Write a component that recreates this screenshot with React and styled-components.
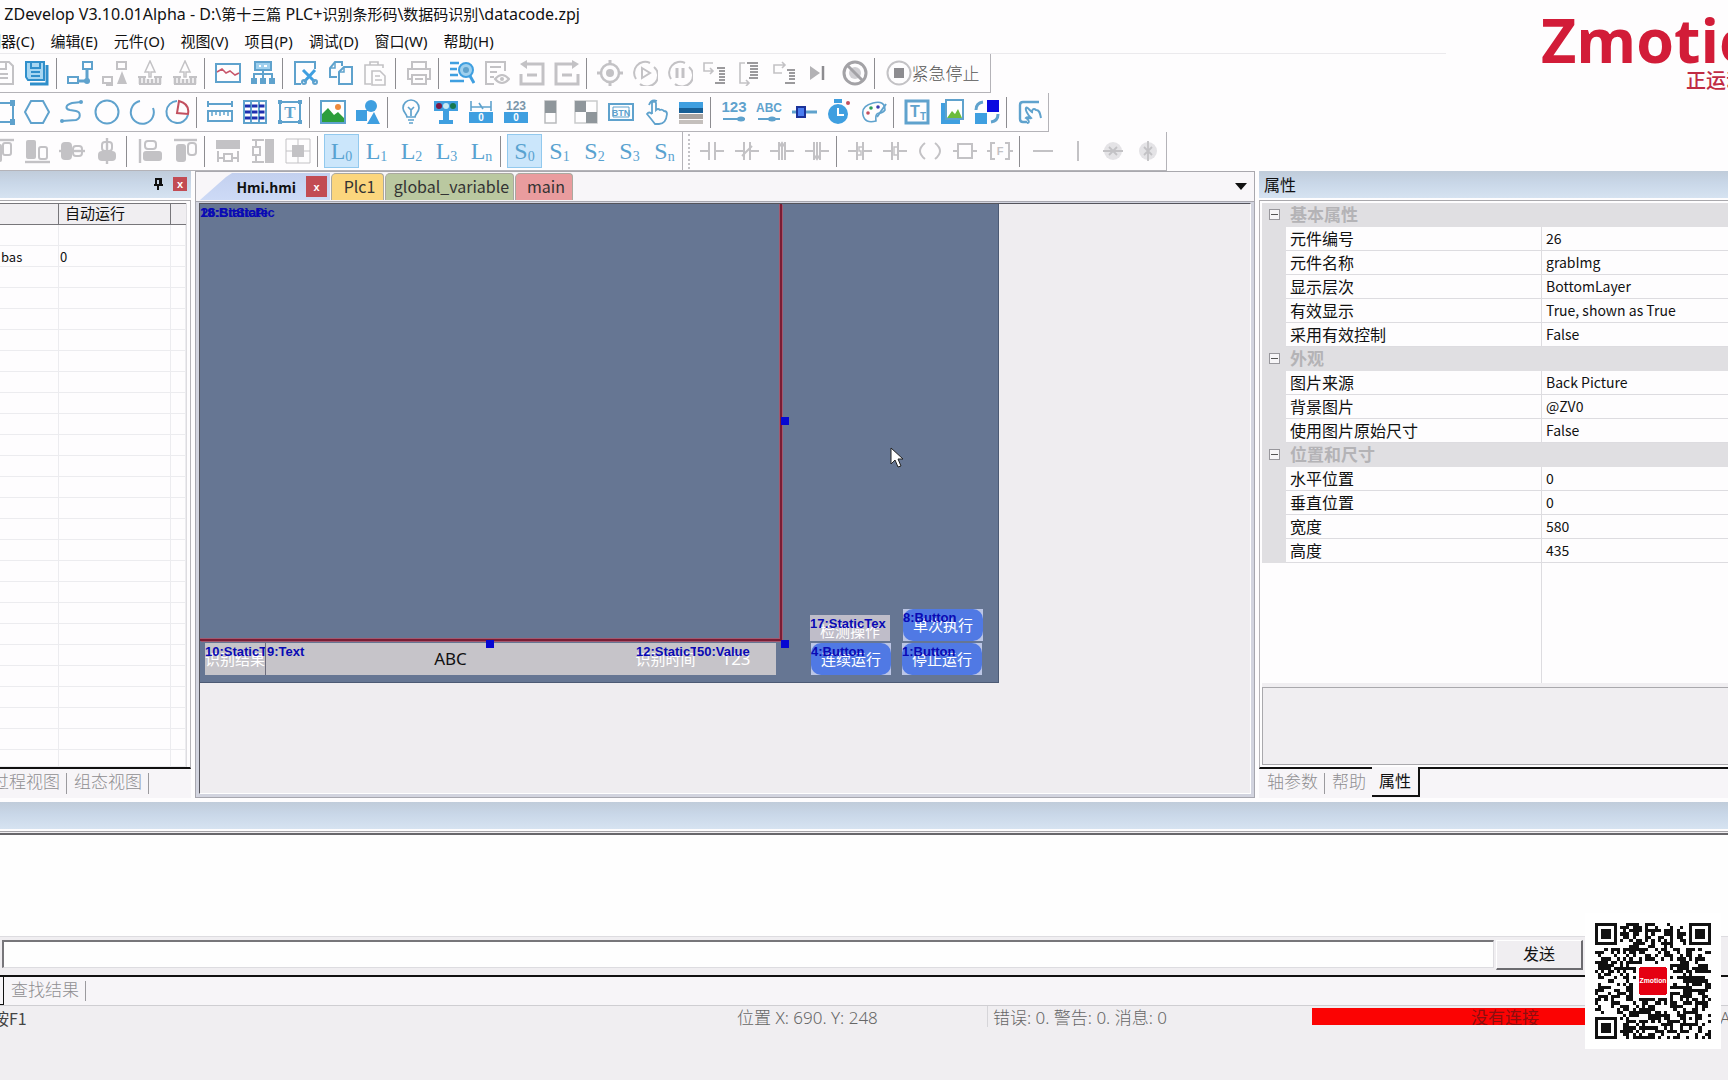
import React from "react";
import styled, { createGlobalStyle, css } from "styled-components";

const BLUE = "#3f9fe0";
const LINE = "#5fa2cd";
const GREY = "#c3c2c5";
const UI = '"Noto Sans CJK SC", "Noto Sans", sans-serif';
const UI_WIDE = '"Noto Sans", "Noto Sans CJK SC", sans-serif';

const Global = createGlobalStyle`
  *, *::before, *::after { box-sizing: border-box; }
  html, body { margin: 0; padding: 0; }
  body { font-family: ${UI}; color: #111; background: #f0eef1; overflow: hidden; }
  button, input { font-family: inherit; margin: 0; }
  button { border: 0; background: none; padding: 0; color: inherit; }
`;

const Page = styled.div`
  position: relative;
  display: flex;
  flex-direction: column;
  min-height: 100vh;
  overflow: hidden;
`;

/* ---------- window top ---------- */
const Top = styled.header`
  position: relative;
  background: #fefdfe;
`;
const TitleBar = styled.h1`
  margin: 0 0 0 -5px;
  height: 28px;
  font-family: ${UI_WIDE};
  font-size: 16px;
  font-weight: 400;
  line-height: 28px;
  white-space: nowrap;
`;
const Han = styled.span`
  font-size: 15px;
`;
const MenuBar = styled.nav`
  display: flex;
  gap: 16px;
  height: 25px;
  margin-left: -29px;
  font-family: ${UI_WIDE};
`;
const MenuItem = styled.button`
  font-size: 15px;
  line-height: 24px;
  white-space: nowrap;
`;
const MenuRule = styled.div`
  height: 1px;
  margin-right: 282px;
  background: #ebeaed;
`;
const Brand = styled.div`
  position: absolute;
  top: 0;
  left: calc(100% - 187px);
  width: 187px;
  height: 96px;
  overflow: hidden;
  white-space: nowrap;
  color: #d21c38;
`;
const BrandName = styled.div`
  height: 70px;
  font: 700 61px/80px "Open Sans", sans-serif;
`;
const BrandSub = styled.div`
  padding-left: 145px;
  font-size: 20px;
  line-height: 20px;
  font-weight: 500;
  color: #c02b44;
`;

/* ---------- toolbars ---------- */
const ToolRow = styled.div`
  display: flex;
  height: 39px;
`;
const Toolbar = styled.div`
  display: flex;
  align-items: center;
  height: 39px;
  margin-left: ${(p) => (p.$cut ? "-15px" : "0")};
  border-right: 1px solid #b4b3b8;
  border-bottom: 1px solid #b4b3b8;
`;
const ToolButton = styled.button`
  display: flex;
  align-items: center;
  justify-content: center;
  width: ${(p) => (p.$wide ? "109px" : "35px")};
  height: 34px;
  padding-right: ${(p) => (p.$wide ? "6px" : p.$level ? "0" : "2px")};
  color: ${(p) => (p.$grey ? GREY : LINE)};
  ${(p) =>
    p.$on &&
    css`
      background: #cbe6fb;
      border: 1px solid #92c9ee;
    `}
`;
const StopText = styled.span`
  font-size: 17px;
  line-height: 24px;
  font-weight: 300;
  color: #555;
  white-space: nowrap;
`;
const Separator = styled.span`
  width: 1px;
  height: 31px;
  margin: 0 6px 0 1px;
  background: #8d8c90;
`;
const Grip = styled.span`
  height: 35px;
  margin: 0 5px;
  border-left: 2px dotted #c3c2c6;
`;
const Glyph = styled.svg`
  width: 26px;
  height: 26px;
  flex: none;
  fill: none;
  stroke: currentColor;
  stroke-width: 2;
  text { stroke: none; fill: currentColor; }
`;
const Layer = styled.span`
  font: 400 24px/28px "Liberation Serif", serif;
  color: #58a2d0;
  sub { font-size: 14px; line-height: 14px; vertical-align: -2px; }
`;

/* ---------- docks ---------- */
const Workspace = styled.main`
  flex: 1;
  display: grid;
  grid-template-columns: 191px minmax(0, 1fr) 469px;
  gap: 4px;
  padding-bottom: 4px;
  background: #fefdfe;
`;
const Dock = styled.section`
  display: flex;
  flex-direction: column;
  min-width: 0;
  overflow: hidden;
`;
const DockHeader = styled.header`
  display: flex;
  align-items: center;
  gap: 8px;
  height: 27px;
  flex: none;
  padding: 0 4px 2px 5px;
  background: linear-gradient(#c0ccda, #c9d7e8 45%, #d6e3f1);
`;
const DockTitle = styled.h2`
  margin: 0;
  font-size: 16px;
  line-height: 24px;
  font-weight: 400;
`;
const Spacer = styled.span`
  flex: 1;
`;
const PinButton = styled.button`
  display: flex;
  width: 14px;
  height: 14px;
`;
const CloseButton = styled.button`
  width: ${(p) => (p.$size)}px;
  height: ${(p) => (p.$size)}px;
  flex: none;
  background: #c24b53;
  color: #fff;
  font: 700 11px/12px "Liberation Sans", sans-serif;
`;
const DockBody = styled.div`
  flex: 1;
  display: flex;
  flex-direction: column;
  margin-top: 2px;
  border-top: 1px solid #a9a8ac;
  border-bottom: 2px solid #111;
  background: #fefdfe;
  ${(p) =>
    p.$side === "left"
      ? css`
          border-right: 1px solid #b5b4b8;
          padding: 2px 3px 0 0;
        `
      : css`
          border-left: 1px solid #b5b4b8;
          padding: 2px 0 2px 2px;
        `}
`;
const TabStrip = styled.div`
  display: flex;
  height: 29px;
  flex: none;
  padding-left: 1px;
  background: #f7f5f8;
  margin-left: ${(p) => (p.$cut ? "-16px" : "0")};
`;
const DockTab = styled.button`
  position: relative;
  padding: 0 7px 5px;
  font-size: ${(p) => (p.$on ? 16 : 17)}px;
  line-height: 24px;
  color: ${(p) => (p.$on ? "#111" : "#8f8e91")};
  font-weight: ${(p) => (p.$on ? 400 : 300)};
  white-space: nowrap;
  ${(p) =>
    p.$on &&
    css`
      margin-top: -2px;
      margin-left: -1px;
      margin-bottom: 1px;
      background: #f7f5f8;
      border-right: 2px solid #111;
      border-bottom: 2px solid #111;
      padding-bottom: 2px;
    `}
  ${(p) =>
    p.$rule &&
    css`
      &::after {
        content: "";
        position: absolute;
        right: 0;
        top: 4px;
        bottom: 4px;
        border-right: 1px solid #9b9a9e;
      }
    `}
`;

/* ---------- left table ---------- */
const FileTable = styled.table`
  width: 100%;
  table-layout: fixed;
  border-collapse: separate;
  border-spacing: 0;
  line-height: 18px;
  border-right: 1px solid #dddce0;
  flex: 1;
  th {
    height: 22px;
    padding: 0 6px 2px;
    text-align: left;
    font-size: 15px;
    font-weight: 400;
    background: #f0eef1;
    border: solid #77767a;
    border-width: 1px 1px 1px 0;
  }
  th:last-child { border-right: 0; }
  td {
    height: 21px;
    padding: 2px 1px 0;
    border-right: 1px solid #ececef;
    border-bottom: 1px solid #ececef;
    font-size: 13px;
  }
  tr:last-child td { height: auto; }
`;

/* ---------- editor ---------- */
const EditorTabs = styled.div`
  display: flex;
  align-items: flex-end;
  height: 30px;
  flex: none;
  padding: 0 3px 1px 4px;
  background: #f8f6f9;
  border: solid #a9a8ae;
  border-width: 1px 1px 0 1px;
`;
const FileTab = styled.button`
  width: ${(p) => p.$w}px;
  height: 27px;
  margin-left: 1px;
  padding: 0 0 3px 4px;
  font-size: 16px;
  line-height: 24px;
  color: #333;
  white-space: nowrap;
  border: 1px solid #aaa9a0;
  border-bottom: 0;
  border-radius: 5px 4px 0 0;
  background: ${(p) => p.$bg};
`;
const ActiveTab = styled.div`
  display: flex;
  align-items: center;
  justify-content: flex-end;
  gap: 10px;
  width: 130px;
  height: 27px;
  padding-right: 3px;
  background: linear-gradient(#c3d0ef, #cddaf6);
  clip-path: polygon(0 100%, 26px 4px, 32px 0, 100% 0, 100% 100%);
`;
const ActiveTabLabel = styled.button`
  font-size: 14px;
  font-weight: 700;
  line-height: 26px;
`;
const TabListButton = styled.button`
  align-self: center;
  width: 20px;
  height: 14px;
  display: flex;
  justify-content: center;
  align-items: center;
`;
const EditorFrame = styled.div`
  flex: 1;
  display: flex;
  padding: 1px 3px 3px;
  background: #d2d4df;
  border: 1px solid #a7a7af;
`;
const EditorView = styled.div`
  flex: 1;
  overflow: hidden;
  background: #efedf0;
  border: 1px solid #54545c;
  border-right-color: #fff;
  border-bottom-color: #fff;
`;
const Stage = styled.div`
  position: relative;
  width: 799px;
  height: 479px;
  background: #667693;
  border: solid #4c5a74;
  border-width: 0 1px 1px 0;
  overflow: hidden;
`;
const Selected = styled.div`
  position: absolute;
  inset: 0 auto auto 0;
  width: 582px;
  height: 437px;
  border: solid #7a1c34;
  border-width: 0 2px 2px 0;
  box-shadow: 1px 1px 0 #a25a70, inset -1px -1px 0 #a25a70;
`;
const Handle = styled.i`
  position: absolute;
  left: ${(p) => p.$x}px;
  top: ${(p) => p.$y}px;
  width: 8px;
  height: 8px;
  margin: -4px;
  background: #0707d2;
`;
const Item = styled.div`
  position: absolute;
  left: ${(p) => p.$x}px;
  top: ${(p) => p.$y}px;
  width: ${(p) => p.$w}px;
  height: ${(p) => p.$h || 32}px;
  overflow: hidden;
  background: ${(p) => p.$bg || "#c6c4c9"};
  border-right: ${(p) => (p.$edge ? "1px solid #6d6d7c" : "0")};
  color: ${(p) => (p.$dark ? "#111" : "#fff")};
  font-size: 15px;
  line-height: 32px;
  text-align: center;
  white-space: nowrap;
`;
const Value = styled(Item)`
  font-family: ${UI_WIDE};
  font-size: 17px;
`;
const ItemTag = styled.span`
  position: absolute;
  left: ${(p) => (p.$in ? 1 : 0)}px;
  top: 1px;
  font: 700 13px/16px "Liberation Sans", sans-serif;
  color: #0a0ab4;
  white-space: nowrap;
`;
const HmiButton = styled.button`
  width: 100%;
  height: 100%;
  display: block;
  background: #5079e4;
  border-radius: 10px;
  color: #fff;
  font-size: 15px;
  line-height: 32px;
`;
const Pointer = styled.svg`
  position: absolute;
  left: 690px;
  top: 243px;
  width: 13px;
  height: 21px;
`;

/* ---------- property grid ---------- */
const PropTable = styled.table`
  width: 100%;
  flex: none;
  table-layout: fixed;
  border-collapse: separate;
  border-spacing: 0;
  font-size: 16px;
  line-height: 20px;
  th, td { height: 24px; padding: 0 4px 2px; text-align: left; white-space: nowrap; font-weight: 400; }
`;
const Gutter = styled.td`
  background: #e0dfe2;
`;
const Category = styled.th`
  && { font-size: 17px; font-weight: 700; }
  color: #b4b3b6;
  background: #e0dfe2;
`;
const PropName = styled.th`
  border-bottom: 1px solid #dddce0;
`;
const PropValue = styled.td`
  border-bottom: 1px solid #dddce0;
  border-left: 1px solid #dddce0;
  font-size: 14px;
`;
const Fold = styled.button`
  display: block;
  width: 11px;
  height: 11px;
  margin-left: 3px;
  border: 1px solid #98979c;
  background: linear-gradient(#555, #555) center / 7px 1px no-repeat #f7f6f8;
`;
const PropRest = styled.div`
  flex: 1;
  display: grid;
  grid-template-columns: 279px 1fr;
  i:last-child { border-left: 1px solid #dddce0; }
`;
const PropHelp = styled.div`
  height: 82px;
  flex: none;
  border-top: 4px solid #f0eef1;
  background: #f0eef1;
  box-shadow: inset 1px 1px 0 #a9a8ac, inset 0 -1px 0 #a9a8ac;
`;

/* ---------- output dock ---------- */
const Output = styled.section`
  background: #f0eef1;
`;
const OutputRim = styled.div`
  height: 6px;
  border-top: 2px solid #fefdfe;
  border-bottom: 2px solid #68676b;
  box-shadow: inset 0 1px 0 #a5a4a8;
`;
const OutputLog = styled.div`
  height: 102px;
  background: #fefefe;
  border-bottom: 1px solid #dddce0;
`;
const CommandRow = styled.form`
  display: flex;
  gap: 2px;
  height: 40px;
  padding: 3px 145px 7px 2px;
  border-bottom: 2px solid #111;
`;
const CommandInput = styled.input`
  flex: 1;
  min-width: 0;
  height: 28px;
  border: 1px solid #dddce0;
  border-top: 2px solid #77767a;
  border-left: 2px solid #77767a;
  border-radius: 0;
  background: #fefefe;
  font-size: 15px;
`;
const SendButton = styled.button`
  width: 87px;
  height: 30px;
  padding-bottom: 3px;
  font-size: 16px;
  line-height: 24px;
  background: #f0eef1;
  border: 1px solid #fff;
  border-right: 2px solid #6c6b70;
  border-bottom: 2px solid #6c6b70;
`;
const OutputTabs = styled(TabStrip)`
  padding-left: 0;
  border-bottom: 1px solid #cfced2;
`;
const OpenTabEdge = styled.span`
  width: 4px;
  border: solid #111;
  border-width: 0 1px 1px 0;
`;

/* ---------- status bar ---------- */
const StatusBar = styled.footer`
  display: flex;
  height: 74px;
  padding-bottom: 53px;
  font-family: ${UI_WIDE};
  font-size: 17px;
  font-weight: 300;
  line-height: 24px;
  color: #666;
  white-space: nowrap;
`;
const StatusHint = styled.span`
  flex: 1;
  margin-left: -7px;
  font-family: ${UI};
  font-size: 16px;
  font-weight: 400;
  color: #444;
`;
const StatusCell = styled.span`
  width: ${(p) => p.$w}px;
  padding-left: ${(p) => (p.$rule ? 5 : 0)}px;
  border-left: ${(p) => (p.$rule ? "1px solid #d6d5d9" : "0")};
`;
const Link = styled.span`
  width: 386px;
  height: 17px;
  margin: 2px 22px 0 5px;
  overflow: hidden;
  background: #fb0303;
  color: #8a0f10;
  font-size: 17px;
  line-height: 20px;
  font-weight: 400;
  text-align: center;
`;
const Clip = styled.span`
  width: 8px;
  overflow: hidden;
`;
const QrCard = styled.div`
  position: absolute;
  right: 7px;
  bottom: 31px;
  width: 136px;
  height: 136px;
  padding: 10px;
  background: #fff;
  svg { display: block; width: 116px; height: 116px; }
`;

/* ---------- icons ---------- */
const f = { fill: "currentColor", stroke: "none" };
const T = ({ x = 13, y, s, c, serif, children }) => (
  <text x={x} y={y} fontSize={s} textAnchor="middle" fontWeight="700" style={c ? { fill: c } : undefined}
    fontFamily={serif ? "Liberation Serif, serif" : "Liberation Sans, sans-serif"}>{children}</text>
);
const contact = <path d="M1 13h9M16 13h9M10 4v18M16 4v18" />;
const listLines = "M15 8h8M17 11h6M17 14h6M17 17h6M17 20h6M13 23h10";

const icons = {
  save: <><path d="M3 2h17l4 4v18H3z" /><path d="M8 2v7h9V2M8 14h11M8 18h11" /></>,
  saveAll: <g stroke="#2f8fcb"><path d="M2 2h18v18H4l-2-3z" fill="#a6d6f2" /><path d="M7 2v6h9V2M7 12h9M7 16h9" /><path d="M23 5v19H6" strokeWidth="3" /></g>,
  connect: <><path d="M16 2h9v7h-9zM1 17h10v6H1z" /><path d="M20 9v12h-9" strokeWidth="3" /><circle cx="20" cy="21" r="3" {...f} /></>,
  disconnect: <><path d="M15 2h9v7h-9zM1 17h9v6H1zM4 25h7" /><path d="M20 11l5 13H15z" {...f} /></>,
  down: <><path d="M13 1l-5 11h4v5h2v-5h4z" strokeWidth="1.5" /><path d="M1 17h8M17 17h8M2 24h22" /><path d="M3 18v6M7 18v6M11 19v5M15 19v5M19 18v6M23 18v6" strokeWidth="2.6" /></>,
  scope: <><path d="M1 4h24v18H1z" /><path d="M2 12l5-3 4 4 4-2 5 4 4-2" stroke="#c8566b" strokeWidth="1.5" /></>,
  network: <><path d="M5 2h16v8H5z" fill="#9fd0ee" /><path d="M13 10v8M4 18v-4h18v4" /><path d="M1 18h6v6H1zM10 18h6v6h-6zM19 18h6v6h-6z" {...f} /><path d="M9 6h2M14 6h3" stroke="#fff" /></>,
  cut: <><path d="M22 9V2H2v22h6" /><path d="M10 10l12 12M22 10L11 22" stroke={BLUE} strokeWidth="3" /><circle cx="11" cy="22" r="2" /><circle cx="22" cy="22" r="2" /></>,
  copy: <><path d="M9 17H2V8l5-6h7v4" /><path d="M16 7h8v17H11V12z" /><path d="M7 2v6H2M16 7v5h-5" strokeWidth="1.5" /></>,
  paste: <><path d="M8 24H2V5h18v3M7 5V2h8v3" strokeWidth="1.6" /><path d="M9 11h8l5 5v9H9zM12 16h5M12 20h7" strokeWidth="1.6" /></>,
  print: <><path d="M6 8V2h14v6M6 19H2V9h22v10h-4" /><path d="M6 15h14v9H6zM9 19h8" /></>,
  find: <><path d="M1 3h9M1 9h7M1 15h8M1 21h14" stroke={BLUE} strokeWidth="2.6" /><circle cx="17" cy="10" r="7" fill="#9fd0ee" stroke={BLUE} /><circle cx="17" cy="10" r="3" {...f} /><path d="M21 16l4 7" stroke={BLUE} strokeWidth="3" /></>,
  review: <><path d="M10 24H2V2h19v9M6 7h11M6 12h7M6 17h4" /><path d="M11 19q7-8 14 0q-7 8-14 0z" /><circle cx="18" cy="19" r="2" {...f} /></>,
  undo: <><path d="M6 4h18v20H2V14M8 15h10" strokeWidth="3" /><path d="M8 0v9L1 4z" {...f} /></>,
  redo: <><path d="M20 4H2v20h22V14M8 15h10" strokeWidth="3" /><path d="M18 0v9l7-5z" {...f} /></>,
  target: <><circle cx="13" cy="13" r="9" strokeWidth="2.5" /><circle cx="13" cy="13" r="4" {...f} /><path d="M13 0v5M13 21v5M0 13h5M21 13h5" strokeWidth="3" /></>,
  play: <><path d="M4 19a11 11 0 0 1 14-16M22 7a11 11 0 0 1-14 17" /><path d="M10 8l8 5-8 5z" /></>,
  pause: <><path d="M4 19a11 11 0 0 1 14-16M22 7a11 11 0 0 1-14 17" /><path d="M10 8v10M16 8v10" strokeWidth="3" /></>,
  stepIn: <><path d="M11 3H2v8h8M8 8l3 3-3 3" strokeWidth="1.6" /><path d={listLines} stroke="#9b9a9d" strokeWidth="2.2" /></>,
  stepOver: <><path d="M8 3H3v20h8M9 20l3 3-3 3" strokeWidth="1.6" /><path d="M10 3h11M13 6h8M13 9h8M13 12h8M13 15h8M12 18h9" stroke="#9b9a9d" strokeWidth="2.2" /></>,
  stepOut: <><path d="M13 5H2v8h8M10 2l3 3-3 3" strokeWidth="1.6" /><path d="M15 10h8M17 13h6M17 16h6M17 19h6M13 23h10" stroke="#9b9a9d" strokeWidth="2.2" /></>,
  toCursor: <><path d="M3 6l10 7-10 7z" fill="#b3b2b5" stroke="none" /><path d="M16 6v14" stroke="#8d8c90" strokeWidth="2.5" /></>,
  ban: <g stroke="#a3a2a6"><circle cx="13" cy="13" r="11" strokeWidth="3" /><circle cx="13" cy="13" r="6" fill="#cfced2" stroke="none" /><path d="M5 5l16 16" strokeWidth="3" /></g>,
  stop: <><circle cx="13" cy="13" r="11.5" /><path d="M8 8h10v10H8z" fill="#8d8c90" stroke="none" /></>,

  rect: <path d="M1 4h23v19H1zM22 2h4v4h-4zM22 21h4v4h-4z" />,
  polygon: <path d="M7 2h12l6 11-6 11H7L1 13z" />,
  curve: <><path d="M22 3l-9 1C6 6 6 10 11 11l6 1c5 1 5 7 0 9l-14 1" /><circle cx="22" cy="3" r="2" {...f} /><circle cx="3" cy="22" r="2" {...f} /></>,
  circle: <circle cx="13" cy="13" r="11.5" />,
  arc: <path d="M11 2A11.5 11.5 0 1 0 24 9" />,
  pie: <><path d="M13 2a11 11 0 1 0 11 14" /><path d="M15 2l-2 12 11 1Q26 5 15 2z" stroke="#c2505f" /></>,
  ruler: <><path d="M2 5h22M1 2v6M25 2v6M1 12h24v10H1z" /><path d="M5 12v5M9 12v4M13 12v5M17 12v4M21 12v5" strokeWidth="1.5" /></>,
  table: <><path d="M2 2h22v22H2zM9 2v22M17 2v22" /><path d="M3 7h20M3 13h20M3 19h20" stroke="#1d2fb0" strokeWidth="3" strokeDasharray="5.5 1.5" /></>,
  textBox: <><path d="M3 3h20v20H3z" /><path d="M1 1h4v4H1zM21 1h4v4h-4zM1 21h4v4H1zM21 21h4v4h-4z" {...f} /><T y="19" s="17" serif>T</T></>,
  image: <><path d="M1 2h24v22H1z" fill="#fff" /><path d="M2 23V15l6-6 6 7 4-3 6 6v4z" fill="#2c9e3c" stroke="none" /><circle cx="18" cy="8" r="3" fill="#ef8a3c" stroke="none" /></>,
  shapes: <g fill={BLUE} stroke="none"><circle cx="16" cy="7" r="6" /><path d="M1 11h11v11H1zM19 13l6 12H12z" /></g>,
  bulb: <><path d="M9 18c0-3-4-5-4-9a8 8 0 0 1 16 0c0 4-4 6-4 9zM10 21h6M11 24h4M13 17v-6l-3-3M13 11l3-3" strokeWidth="1.7" /></>,
  sign: <><path d="M1 2h24v10H1zM10 12h6v9h-6zM6 21h14v4H6z" fill={BLUE} stroke="none" /><circle cx="6" cy="7" r="3" fill="#7d1745" stroke="none" /><circle cx="13" cy="7" r="3" fill="#c7e9f3" stroke="none" /><circle cx="20" cy="7" r="3" fill="#15784f" stroke="none" /></>,
  meter: <><path d="M1 13h24v11H1z" fill={BLUE} stroke="none" /><path d="M3 2v10M23 2v10M3 8h20M11 4l4 6" strokeWidth="1.6" /><T y="22" s="10" c="#fff">0</T></>,
  number: <><path d="M1 13h24v11H1z" fill={BLUE} stroke="none" /><T y="11" s="12" c="#7b96aa">123</T><T y="22" s="10" c="#fff">0</T></>,
  toggle: <><path d="M7 2h11v22H7z" stroke="#b9babd" strokeWidth="1.5" /><path d="M7 2h11v12H7z" fill="#8f969b" stroke="none" /></>,
  checker: <><path d="M2 2h22v22H2z" stroke="#c9cacc" strokeWidth="1.5" /><path d="M2 2h11v11H2zM13 13h11v11H13z" fill="#8f969b" stroke="none" /></>,
  btn: <><path d="M1 5h24v16H1z" /><path d="M5 8h16v10H5z" strokeWidth="1" /><T y="17" s="9">BTN</T></>,
  hand: <path d="M9 15V4q2-3 4 0v7q2-2 4 0 2-1 4 1 3 0 3 3-1 10-8 10h-4q-3-4-8-10 2-3 5 0M6 6q2-6 8-4" strokeWidth="1.8" />,
  panel: <g stroke="none"><path d="M1 3h24v6H1z" fill={BLUE} /><path d="M1 9h24v5H1z" fill="#175f96" /><path d="M1 15h24v5H1z" fill="#a8a3a0" /><path d="M1 21h24v4H1z" fill="#c4bfbc" /></g>,
  n123: <><T y="13" s="15">123</T><path d="M2 20h22" /><ellipse cx="20" cy="20" rx="4" ry="2.5" {...f} /></>,
  abc: <><T y="13" s="12">ABC</T><path d="M2 20h22" /><ellipse cx="16" cy="20" rx="4" ry="2.5" {...f} /></>,
  slider: <><path d="M1 13h25" strokeWidth="3" /><path d="M6 8h8v10H6z" fill="#4b7df0" stroke="#1c3299" /></>,
  timer: <g fill={BLUE} stroke="none"><circle cx="12" cy="15" r="10" /><path d="M8 0h8v4H8z" /><circle cx="22" cy="4" r="2" fill="#c2505f" /><path d="M12 9v7h6" fill="none" stroke="#fff" strokeWidth="2" /></g>,
  palette: <><path d="M15 22Q4 25 2 16T12 4t12 7q-2 3-6 3t-3 8z" strokeWidth="1.6" /><path d="M25 5l-9 13" /><circle cx="7" cy="14" r="1.8" fill="#c2505f" stroke="none" /><circle cx="10" cy="9" r="1.8" fill="#2c9e5c" stroke="none" /><circle cx="17" cy="8" r="1.8" fill="#3a3bb0" stroke="none" /></>,
  fonts: <><path d="M2 2h22v22H2z" strokeWidth="3" /><T x="11" y="18" s="16">T</T><T x="19" y="21" s="10">T</T></>,
  gallery: <><path d="M7 1h17v19H7z" fill="#fff" /><path d="M4 4v19h17" strokeWidth="4" stroke={BLUE} /><path d="M8 19l5-7 3 3 3-5 4 9z" fill="#6cbc3c" stroke="none" /></>,
  swap: <><path d="M13 1h12v12H13z" fill="#0a0ae0" stroke="none" /><path d="M1 14h12v11H1z" fill={BLUE} stroke="none" /><path d="M2 11q0-7 7-8M24 15q0 7-7 8" strokeWidth="3" /></>,
  gesture: <><path d="M22 3H6q-3 0-3 3v14q0 3 3 3h4" strokeWidth="2.4" /><path d="M10 24c3 0 2-3-1-5 2-2 3 1 5 0-3-3-6-8-5-10s4 3 6 4c0-3 2-4 4-2 4 0 4 4 5 8" strokeWidth="2" /></>,

  alTop: <><path d="M2 2h23" strokeWidth="2.4" /><rect x="4" y="6" width="9" height="18" rx="2" {...f} /><rect x="14" y="5" width="8" height="12" rx="2" /></>,
  alBottom: <><path d="M1 24h25" strokeWidth="2.4" /><rect x="2" y="2" width="10" height="19" rx="2" {...f} /><rect x="15" y="9" width="8" height="12" rx="2" /></>,
  alMid: <><path d="M0 13h26" strokeWidth="2.4" /><rect x="2" y="4" width="11" height="18" rx="4" {...f} /><rect x="14" y="8" width="9" height="10" rx="3" /></>,
  alCenter: <><path d="M13 0v26" strokeWidth="2.4" /><rect x="4" y="13" width="18" height="10" rx="4" {...f} /><rect x="8" y="4" width="10" height="9" rx="3" /></>,
  alLeft: <><path d="M3 1v24" strokeWidth="2.4" /><rect x="8" y="3" width="11" height="8" rx="3" /><rect x="6" y="13" width="19" height="10" rx="3" {...f} /></>,
  alTop2: <><path d="M2 2h23" strokeWidth="2.4" /><rect x="4" y="6" width="10" height="18" rx="3" {...f} /><rect x="16" y="5" width="8" height="12" rx="3" /></>,
  sameW: <><path d="M1 2h24v9H1z" {...f} /><path d="M9 16h8v7H9zM3 13v11M23 13v11M3 20h5M18 20h5" /></>,
  sameH: <><path d="M15 1h9v24h-9z" {...f} /><path d="M3 9h7v8H3zM2 2h12M2 24h12M6 3v5M6 18v5" /></>,
  sameWH: <><path d="M7 7h12v12H7z" {...f} /><path d="M1 1h24v24H1zM1 13h24M13 1v24" strokeWidth="1" /></>,

  no: contact,
  nc: <>{contact}<path d="M8 18L18 8" /></>,
  rise: <>{contact}<path d="M13 22V6M10 9l3-4 3 4" /></>,
  fall: <>{contact}<path d="M13 4v16M10 17l3 4 3-4" /></>,
  sContact: <>{contact}<path d="M15 9h-3v4h2v4h-3" strokeWidth="1.5" /></>,
  eContact: <>{contact}<path d="M15 9h-3v8h3" strokeWidth="1.5" /></>,
  coil: <path d="M8 5q-10 8 0 16M18 5q10 8 0 16" />,
  box: <path d="M6 6h14v14H6zM1 13h5M20 13h5" />,
  func: <><path d="M8 5H4v16h4M18 5h4v16h-4M0 13h4M22 13h4" /><T y="17" s="11">F</T></>,
  hline: <path d="M3 13h20" />,
  vline: <path d="M13 3v20" />,
  delH: <><circle cx="13" cy="13" r="9" fill="#e4e3e6" stroke="none" /><path d="M3 13h20M9 9l8 8M17 9l-8 8" strokeWidth="1.8" /></>,
  delV: <><circle cx="13" cy="13" r="9" fill="#e4e3e6" stroke="none" /><path d="M13 3v20M9 9l8 8M17 9l-8 8" strokeWidth="1.8" /></>,
};

const fileBar = [
  "-save", "saveAll", "|", "connect", "-disconnect", "-down", "-down", "|", "scope", "network", "|",
  "cut", "copy", "-paste", "|", "-print", "|", "find", "-review", "-undo", "-redo", "|",
  "-target", "-play", "-pause", "-stepIn", "-stepOver", "-stepOut", "-toCursor", "-ban", "|",
];
const drawBar = [
  "rect", "polygon", "curve", "circle", "arc", "pie", "|", "ruler", "table", "textBox", "|", "image", "shapes", "|",
  "bulb", "sign", "meter", "number", "toggle", "checker", "btn", "hand", "panel", "|",
  "n123", "abc", "slider", "timer", "palette", "|", "fonts", "gallery", "swap", "|", "gesture",
];
const alignBar = [
  "-alTop", "-alBottom", "-alMid", "-alCenter", "|", "-alLeft", "-alTop2", "|", "-sameW", "-sameH", "-sameWH", "|",
];
const ladderBar = [
  "-no", "-nc", "-rise", "-fall", "|", "-sContact", "-eContact", "-coil", "-box", "-func", "|", "-hline", "-vline", "-delH", "-delV",
];

const Tools = ({ list }) =>
  list.map((entry, i) => {
    if (entry === "|") return <Separator key={i} />;
    const grey = entry[0] === "-";
    const name = grey ? entry.slice(1) : entry;
    return (
      <ToolButton key={i} type="button" $grey={grey} aria-label={name}>
        <Glyph viewBox="0 0 26 26">{icons[name]}</Glyph>
      </ToolButton>
    );
  });

const Levels = ({ letter }) =>
  ["0", "1", "2", "3", "n"].map((n) => (
    <ToolButton key={n} type="button" $level $on={n === "0"}>
      <Layer>{letter}<sub>{n}</sub></Layer>
    </ToolButton>
  ));

const menus = ["控制器(C)", "编辑(E)", "元件(O)", "视图(V)", "项目(P)", "调试(D)", "窗口(W)", "帮助(H)"];

const props = [
  ["基本属性", [["元件编号", "26"], ["元件名称", "grabImg"], ["显示层次", "BottomLayer"], ["有效显示", "True, shown as True"], ["采用有效控制", "False"]]],
  ["外观", [["图片来源", "Back Picture"], ["背景图片", "@ZV0"], ["使用图片原始尺寸", "False"]]],
  ["位置和尺寸", [["水平位置", "0"], ["垂直位置", "0"], ["宽度", "580"], ["高度", "435"]]],
];

const hmiButtons = [
  { x: 703, y: 405, tag: "8:Button", text: "单次执行" },
  { x: 611, y: 439, tag: "4:Button", text: "连续运行" },
  { x: 702, y: 439, tag: "1:Button", text: "停止运行" },
];

/* QR symbol: 37 modules a side, three finders and one alignment mark */
const QR = 37;
const ring = (x, y, cx, cy) => Math.max(Math.abs(x - cx), Math.abs(y - cy));
function qrPath() {
  let seed = 7919;
  let d = "";
  for (let y = 0; y < QR; y++) {
    for (let x = 0; x < QR; x++) {
      seed = (seed * 1103515245 + 12345) % 2147483648;
      let on = (seed >> 12) % 100 < 50;
      for (const [cx, cy] of [[3, 3], [33, 3], [3, 33]]) {
        const r = ring(x, y, cx, cy);
        if (r <= 4) on = r !== 4 && r !== 2;
      }
      const a = ring(x, y, 30, 30);
      if (a <= 2) on = a !== 1;
      if (on) d += `M${x} ${y}h1v1h-1z`;
    }
  }
  return d;
}
const qr = qrPath();

export default function App() {
  return (
    <Page>
      <Global />
      <Top>
        <TitleBar>
          - ZDevelop V3.10.01Alpha - D:\<Han>第十三篇</Han> PLC+<Han>识别条形码</Han>\<Han>数据码识别</Han>\datacode.zpj
        </TitleBar>
        <MenuBar>{menus.map((m) => <MenuItem key={m} type="button">{m}</MenuItem>)}</MenuBar>
        <MenuRule />
        <ToolRow>
          <Toolbar $cut>
            <Tools list={fileBar} />
            <ToolButton type="button" $wide $grey>
              <Glyph viewBox="0 0 26 26">{icons.stop}</Glyph>
              <StopText>紧急停止</StopText>
            </ToolButton>
          </Toolbar>
        </ToolRow>
        <ToolRow>
          <Toolbar $cut><Tools list={drawBar} /></Toolbar>
        </ToolRow>
        <ToolRow>
          <Toolbar $cut>
            <Tools list={alignBar} />
            <Levels letter="L" />
            <Separator />
            <Levels letter="S" />
          </Toolbar>
          <Toolbar>
            <Grip />
            <Tools list={ladderBar} />
          </Toolbar>
        </ToolRow>
        <Brand>
          <BrandName>Zmotion</BrandName>
          <BrandSub>正运动技术</BrandSub>
        </Brand>
      </Top>

      <Workspace>
        <Dock>
          <DockHeader>
            <Spacer />
            <PinButton type="button" aria-label="固定">
              <svg width="14" height="14" viewBox="0 0 14 14" fill="none" stroke="#111" strokeWidth="2">
                <path d="M5 2h5v6H5zM9 2v6M3 8h9M7 9v4" />
              </svg>
            </PinButton>
            <CloseButton type="button" $size={14}>x</CloseButton>
          </DockHeader>
          <DockBody $side="left">
            <FileTable>
              <colgroup><col width="59" /><col width="112" /><col /></colgroup>
              <thead><tr><th aria-label="文件" /><th>自动运行</th><th aria-label="备注" /></tr></thead>
              <tbody>
                {Array.from({ length: 26 }, (_, i) => (
                  <tr key={i}>
                    <td>{i === 1 ? "bas" : ""}</td>
                    <td>{i === 1 ? "0" : ""}</td>
                    <td />
                  </tr>
                ))}
              </tbody>
            </FileTable>
          </DockBody>
          <TabStrip $cut>
            <DockTab type="button" $rule>过程视图</DockTab>
            <DockTab type="button" $rule>组态视图</DockTab>
          </TabStrip>
        </Dock>

        <Dock>
          <EditorTabs>
            <ActiveTab>
              <ActiveTabLabel type="button">Hmi.hmi</ActiveTabLabel>
              <CloseButton type="button" $size={21}>x</CloseButton>
            </ActiveTab>
            <FileTab type="button" $w={53} $bg="#fbd67d">Plc1</FileTab>
            <FileTab type="button" $w={129} $bg="#bac8a0">global_variable</FileTab>
            <FileTab type="button" $w={58} $bg="#e99c9e">main</FileTab>
            <Spacer />
            <TabListButton type="button" aria-label="窗口列表">
              <svg width="12" height="7" viewBox="0 0 12 7"><path d="M0 0h12L6 7z" fill="#111" /></svg>
            </TabListButton>
          </EditorTabs>
          <EditorFrame>
            <EditorView>
              <Stage>
                <Item $x={5} $y={439} $w={61} $edge>识别结果<ItemTag>10:StaticT</ItemTag></Item>
                <Value $x={66} $y={439} $w={369} $dark>ABC<ItemTag $in>9:Text</ItemTag></Value>
                <Item $x={435} $y={439} $w={61}>识别时间<ItemTag $in>12:StaticT</ItemTag></Item>
                <Value $x={496} $y={439} $w={80}>123<ItemTag $in>50:Value</ItemTag></Value>
                <Item $x={610} $y={411} $w={80} $h={26} $bg="#bfbdc9">检测操作<ItemTag>17:StaticTex</ItemTag></Item>
                {hmiButtons.map((b) => (
                  <Item key={b.tag} $x={b.x} $y={b.y} $w={80} $bg="#bcc6e6">
                    <HmiButton type="button">{b.text}</HmiButton>
                    <ItemTag>{b.tag}</ItemTag>
                  </Item>
                ))}
                <Selected>
                  <ItemTag $in>26:StaticPic</ItemTag>
                  <ItemTag>18:BitState</ItemTag>
                </Selected>
                <Handle $x={585} $y={217} />
                <Handle $x={290} $y={440} />
                <Handle $x={585} $y={440} />
                <Pointer viewBox="0 0 13 21">
                  <path d="M1 1v16l4-4 3 7 3-1-3-7h5z" fill="#fff" stroke="#222" />
                </Pointer>
              </Stage>
            </EditorView>
          </EditorFrame>
        </Dock>

        <Dock>
          <DockHeader><DockTitle>属性</DockTitle></DockHeader>
          <DockBody $side="right">
            <PropTable>
              <colgroup><col width="24" /><col width="255" /><col /></colgroup>
              <tbody>
                {props.map(([name, rows]) => (
                  <React.Fragment key={name}>
                    <tr>
                      <Gutter><Fold type="button" aria-label="折叠" /></Gutter>
                      <Category colSpan={2}>{name}</Category>
                    </tr>
                    {rows.map(([k, v]) => (
                      <tr key={k}><Gutter /><PropName>{k}</PropName><PropValue>{v}</PropValue></tr>
                    ))}
                  </React.Fragment>
                ))}
              </tbody>
            </PropTable>
            <PropRest><i /><i /></PropRest>
            <PropHelp />
          </DockBody>
          <TabStrip>
            <DockTab type="button" $rule>轴参数</DockTab>
            <DockTab type="button">帮助</DockTab>
            <DockTab type="button" $on>属性</DockTab>
          </TabStrip>
        </Dock>
      </Workspace>

      <Output>
        <DockHeader />
        <OutputRim />
        <OutputLog role="log" />
        <CommandRow>
          <CommandInput type="text" aria-label="命令" />
          <SendButton type="button">发送</SendButton>
        </CommandRow>
        <OutputTabs>
          <OpenTabEdge />
          <DockTab type="button" $rule>查找结果</DockTab>
        </OutputTabs>
      </Output>

      <StatusBar>
        <StatusHint>按F1</StatusHint>
        <StatusCell $w={250}>位置 X: 690. Y: 248</StatusCell>
        <StatusCell $w={320} $rule>错误: 0. 警告: 0. 消息: 0</StatusCell>
        <Link>没有连接</Link>
        <Clip>AI</Clip>
      </StatusBar>

      <QrCard>
        <svg viewBox="0 0 37 37" shapeRendering="crispEdges">
          <path d={qr} fill="#111" />
          <rect x="13" y="13" width="11" height="11" rx="1" fill="#fff" />
          <rect x="14" y="14" width="9" height="9" rx="1" fill="#e50012" />
          <text x="18.5" y="19" fontSize="2.2" fontWeight="700" textAnchor="middle" fill="#fff" fontFamily="Liberation Sans, sans-serif">Zmotion</text>
        </svg>
      </QrCard>
    </Page>
  );
}
